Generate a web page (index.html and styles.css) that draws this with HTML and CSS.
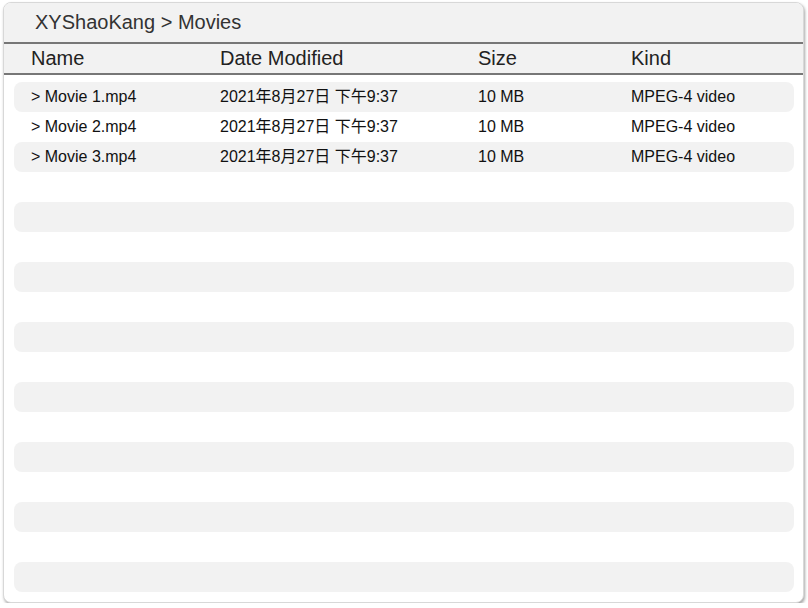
FILE: index.html
```html
<!DOCTYPE html>
<html lang="zh">
<head>
<meta charset="utf-8">
<title>Movies</title>
<link rel="stylesheet" href="styles.css">
</head>
<body>
<div class="window">
  <div class="title">XYShaoKang &gt; Movies</div>
  <div class="cols">
    <div>Name</div>
    <div>Date Modified</div>
    <div>Size</div>
    <div>Kind</div>
  </div>
  <div class="list">
    <div class="row odd"><div>&gt; Movie 1.mp4</div><div>2021年8月27日 下午9:37</div><div>10 MB</div><div>MPEG-4 video</div></div>
    <div class="row"><div>&gt; Movie 2.mp4</div><div>2021年8月27日 下午9:37</div><div>10 MB</div><div>MPEG-4 video</div></div>
    <div class="row odd"><div>&gt; Movie 3.mp4</div><div>2021年8月27日 下午9:37</div><div>10 MB</div><div>MPEG-4 video</div></div>
    <div class="row"></div>
    <div class="row odd"></div>
    <div class="row"></div>
    <div class="row odd"></div>
    <div class="row"></div>
    <div class="row odd"></div>
    <div class="row"></div>
    <div class="row odd"></div>
    <div class="row"></div>
    <div class="row odd"></div>
    <div class="row"></div>
    <div class="row odd"></div>
    <div class="row"></div>
    <div class="row odd"></div>
  </div>
</div>
</body>
</html>
```
FILE: styles.css
```css
html, body {
  margin: 0;
  padding: 0;
  background: #ffffff;
}
body {
  font-family: "Liberation Sans", Arial, "Noto Sans CJK SC", sans-serif;
}
.window {
  box-sizing: border-box;
  margin: 2px 0 0 3px;
  width: 801px;
  height: 601px;
  border: 1px solid #d8d8d8;
  border-radius: 8px;
  background: #ffffff;
  box-shadow: 1px 2px 3px rgba(0, 0, 0, 0.35);
  overflow: hidden;
}
.title {
  height: 39px;
  line-height: 39px;
  padding-left: 31px;
  font-size: 20px;
  color: #333333;
  background: #f2f2f2;
  border-bottom: 2px solid #777777;
}
.cols {
  display: grid;
  grid-template-columns: 189px 258px 153px 1fr;
  height: 29px;
  line-height: 29px;
  padding-left: 27px;
  font-size: 20px;
  color: #222222;
  background: #f2f2f2;
  border-bottom: 2px solid #777777;
}
.list {
  padding: 7px 9px 0 10px;
}
.row {
  display: grid;
  grid-template-columns: 189px 258px 153px 1fr;
  height: 30px;
  line-height: 30px;
  padding-left: 17px;
  border-radius: 8px;
  font-size: 16px;
  color: #111111;
}
.row.odd {
  background: #f2f2f2;
}
```
